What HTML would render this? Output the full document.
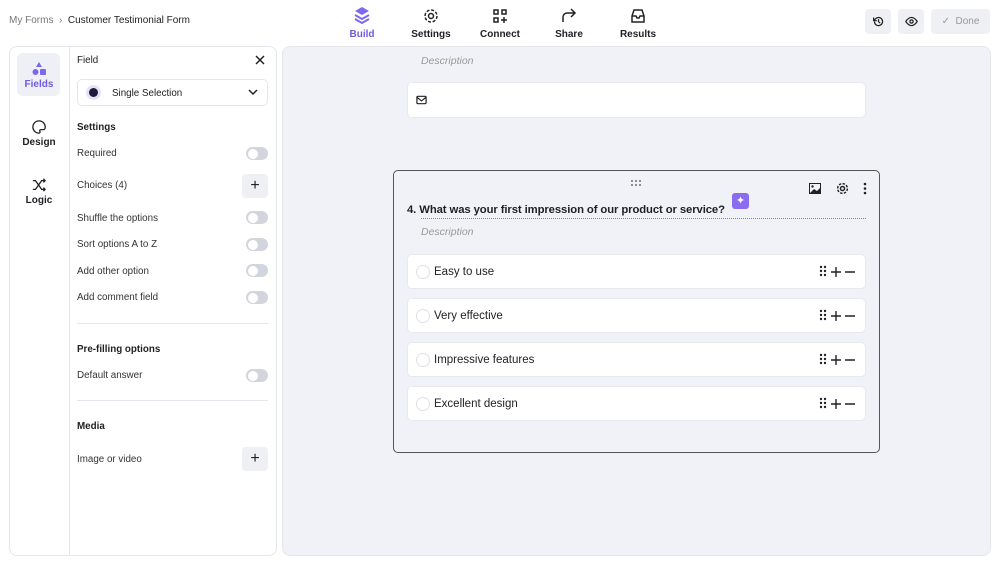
<!DOCTYPE html>
<html><head><meta charset="utf-8"><style>
*{box-sizing:border-box;margin:0;padding:0}
body{width:1000px;height:564px;background:#fff;font-family:"Liberation Sans",sans-serif;position:relative;overflow:hidden;color:#1f1f24}
.abs{position:absolute}
.crumb{left:9px;top:15px;font-size:10px;color:#777}
.crumb b{font-weight:normal;color:#222}
.nav{top:6px;text-align:center;font-size:10px;font-weight:bold;width:60px}
.nav svg{display:block;margin:0 auto 3px}
.tb{top:9px;width:26px;height:25px;background:#eef0f4;border-radius:4px;display:flex;align-items:center;justify-content:center}
.left{left:9px;top:46px;width:268px;height:510px;border:1px solid #e6e7ec;border-radius:8px}
.rail{left:69px;top:46px;width:1px;height:510px;background:#e6e7ec}
.ri{width:44px;text-align:center;font-size:10px;font-weight:bold;left:17px}
.lab{left:77px;font-size:9.8px;color:#333}
.h{left:77px;font-size:9.8px;font-weight:bold;color:#222}
.tg{left:246px;width:22px;height:13px;border-radius:7px;background:#d3d5de}
.tg:after{content:"";position:absolute;left:1.5px;top:1.5px;width:10px;height:10px;border-radius:50%;background:#fff}
.pb{left:242px;width:26px;height:24px;background:#eef0f4;border-radius:4px;text-align:center;line-height:23px;font-size:16px}
.sep{left:77px;width:191px;height:1px;background:#e6e7ec}
.canvas{left:282px;top:46px;width:709px;height:510px;background:#f1f2f7;border-radius:8px;border:1px solid #e6e7ec}
.opt{left:407px;width:459px;height:35px;background:#fff;border-radius:5px;border:1px solid #e8e9ee}
.opt .c{position:absolute;left:8px;top:10px;width:14px;height:14px;border-radius:50%;border:1px solid #e0e0e4}
.opt .t{position:absolute;left:26px;top:11px;font-size:11.5px;color:#222}
.opt .i{position:absolute;right:10px;top:10px;width:36px;height:14px}
</style></head><body>
<div class="abs crumb">My Forms &nbsp;›&nbsp; <b>Customer Testimonial Form</b></div>

<div class="abs nav" style="left:332px;color:#6f5ae0"><svg width="16" height="20" viewBox="0 0 16 20"><path d="M8 1 15 5 8 9 1 5Z" fill="#7b68ee"/><path d="M1 9 8 13 15 9M1 13 8 17 15 13" fill="none" stroke="#7b68ee" stroke-width="2"/></svg>Build</div>
<div class="abs nav" style="left:401px"><svg width="16" height="20" viewBox="0 0 16 16"><circle cx="8" cy="8" r="2.5" fill="none" stroke="#222" stroke-width="1.5"/><circle cx="8" cy="8" r="6" fill="none" stroke="#222" stroke-width="1.5" stroke-dasharray="3 1.7"/></svg>Settings</div>
<div class="abs nav" style="left:470px"><svg width="16" height="20" viewBox="0 0 16 16"><rect x="2" y="2" width="4" height="4" fill="none" stroke="#222" stroke-width="1.5"/><rect x="10" y="2" width="4" height="4" fill="none" stroke="#222" stroke-width="1.5"/><rect x="2" y="10" width="4" height="4" fill="none" stroke="#222" stroke-width="1.5"/><path d="M12 9v6M9 12h6" stroke="#222" stroke-width="1.5"/></svg>Connect</div>
<div class="abs nav" style="left:539px"><svg width="16" height="20" viewBox="0 0 16 16"><path d="M2 14V9a4 4 0 0 1 4-4h8M10 1l4 4-4 4" fill="none" stroke="#222" stroke-width="1.5"/></svg>Share</div>
<div class="abs nav" style="left:608px"><svg width="16" height="20" viewBox="0 0 16 16"><path d="M2 8 4 2h8l2 6v6H2ZM2 8h4l1 2h2l1-2h4" fill="none" stroke="#222" stroke-width="1.5"/></svg>Results</div>

<div class="abs tb" style="left:865px"><svg width="13" height="13" viewBox="0 0 16 16"><path d="M3 8a5 5 0 1 0 1.5-3.5L2 7M2 3v4h4M8 5v3l2 2" fill="none" stroke="#222" stroke-width="1.5"/></svg></div>
<div class="abs tb" style="left:898px"><svg width="13" height="13" viewBox="0 0 16 16"><path d="M1 8s3-5 7-5 7 5 7 5-3 5-7 5-7-5-7-5Z" fill="none" stroke="#222" stroke-width="1.5"/><circle cx="8" cy="8" r="2" fill="none" stroke="#222" stroke-width="1.5"/></svg></div>
<div class="abs tb" style="left:931px;width:59px;color:#999;font-size:10px">✓&nbsp; Done</div>

<div class="abs left"></div>
<div class="abs rail"></div>
<div class="abs" style="left:17px;top:53px;width:43px;height:43px;background:#eef0f6;border-radius:6px"></div>
<div class="abs ri" style="top:62px;color:#6f5ae0"><svg width="14" height="14" viewBox="0 0 14 14" style="display:block;margin:0 auto 3px"><path d="M7 0 10 5H4Z" fill="#7b68ee"/><circle cx="3.5" cy="10" r="3" fill="#7b68ee"/><rect x="8" y="7" width="6" height="6" rx="1" fill="#7b68ee"/></svg>Fields</div>
<div class="abs ri" style="top:120px"><svg width="14" height="14" viewBox="0 0 16 16" style="display:block;margin:0 auto 3px"><path d="M8 1a7 7 0 0 0 0 14c1 0 1.5-1 1-2s0-2 1.5-2H13a2 2 0 0 0 2-2A7 7 0 0 0 8 1Z" fill="none" stroke="#222" stroke-width="1.5"/></svg>Design</div>
<div class="abs ri" style="top:178px"><svg width="14" height="14" viewBox="0 0 16 16" style="display:block;margin:0 auto 3px"><path d="M1 3h3l7 10h4M1 13h3l7-10h4M13 1l2 2-2 2M13 11l2 2-2 2" fill="none" stroke="#222" stroke-width="1.5"/></svg>Logic</div>

<div class="abs lab" style="top:55px;color:#222">Field</div>
<svg class="abs" style="left:255px;top:55px" width="10" height="10" viewBox="0 0 10 10"><path d="M1 1l8 8M9 1l-8 8" stroke="#222" stroke-width="1.5"/></svg>
<div class="abs" style="left:77px;top:79px;width:191px;height:27px;border:1px solid #e6e7ec;border-radius:5px"></div>
<div class="abs" style="left:86px;top:85px;width:15px;height:15px;border-radius:50%;background:#e5e2f6"></div>
<div class="abs" style="left:89px;top:88px;width:9px;height:9px;border-radius:50%;background:#1e1a3c"></div>
<div class="abs lab" style="left:112px;top:88px;color:#222">Single Selection</div>
<svg class="abs" style="left:248px;top:89px" width="10" height="7" viewBox="0 0 10 7"><path d="M1 1l4 4 4-4" fill="none" stroke="#222" stroke-width="1.5"/></svg>

<div class="abs h" style="top:122px">Settings</div>
<div class="abs lab" style="top:148px">Required</div><div class="abs tg" style="top:147px"></div>
<div class="abs lab" style="top:180px">Choices (4)</div><div class="abs pb" style="top:174px">+</div>
<div class="abs lab" style="top:213px">Shuffle the options</div><div class="abs tg" style="top:211px"></div>
<div class="abs lab" style="top:239px">Sort options A to Z</div><div class="abs tg" style="top:238px"></div>
<div class="abs lab" style="top:266px">Add other option</div><div class="abs tg" style="top:264px"></div>
<div class="abs lab" style="top:292px">Add comment field</div><div class="abs tg" style="top:291px"></div>
<div class="abs sep" style="top:323px"></div>
<div class="abs h" style="top:344px">Pre-filling options</div>
<div class="abs lab" style="top:370px">Default answer</div><div class="abs tg" style="top:369px"></div>
<div class="abs sep" style="top:400px"></div>
<div class="abs h" style="top:421px">Media</div>
<div class="abs lab" style="top:454px">Image or video</div><div class="abs pb" style="top:447px">+</div>

<div class="abs canvas"></div>
<div class="abs" style="left:421px;top:55px;font-size:10.5px;font-style:italic;color:#999">Description</div>
<div class="abs" style="left:407px;top:82px;width:459px;height:36px;background:#fff;border-radius:5px;border:1px solid #e8e9ee"></div>
<svg class="abs" style="left:416px;top:95px" width="11" height="10" viewBox="0 0 12 10"><rect x="1" y="1" width="10" height="8" rx="1" fill="none" stroke="#222" stroke-width="1.3"/><path d="M1 2l5 4 5-4" fill="none" stroke="#222" stroke-width="1.3"/></svg>

<div class="abs" style="left:393px;top:170px;width:487px;height:283px;border:1px solid #555;border-radius:5px;background:#f1f2f7"></div>
<svg class="abs" style="left:631px;top:180px" width="10" height="6" viewBox="0 0 10 6"><g fill="#444"><circle cx="1" cy="1" r=".9"/><circle cx="5" cy="1" r=".9"/><circle cx="9" cy="1" r=".9"/><circle cx="1" cy="5" r=".9"/><circle cx="5" cy="5" r=".9"/><circle cx="9" cy="5" r=".9"/></g></svg>
<svg class="abs" style="left:809px;top:183px" width="12" height="11" viewBox="0 0 12 11"><rect x="0.5" y="0.5" width="11" height="10" fill="none" stroke="#222"/><path d="M1 10 5 6 8 8 11 5V10Z" fill="#222"/><circle cx="3.5" cy="3.5" r="1.2" fill="#222"/></svg>
<svg class="abs" style="left:836px;top:182px" width="13" height="13" viewBox="0 0 16 16"><circle cx="8" cy="8" r="2.5" fill="none" stroke="#222" stroke-width="1.8"/><circle cx="8" cy="8" r="6" fill="none" stroke="#222" stroke-width="1.8" stroke-dasharray="3 1.7"/></svg>
<svg class="abs" style="left:863px;top:182px" width="4" height="13" viewBox="0 0 4 13"><g fill="#222"><circle cx="2" cy="2" r="1.3"/><circle cx="2" cy="6.5" r="1.3"/><circle cx="2" cy="11" r="1.3"/></g></svg>
<div class="abs" style="left:732px;top:193px;width:17px;height:16px;background:#8b6cf0;border-radius:3px;color:#fff;font-size:11px;text-align:center;line-height:16px">✦</div>
<div class="abs" style="left:407px;top:204px;font-size:11.3px;font-weight:bold;color:#1f1f24;letter-spacing:-0.1px">4. What was your first impression of our product or service?</div>
<div class="abs" style="left:421px;top:218px;width:445px;border-top:1px dotted #888"></div>
<div class="abs" style="left:421px;top:226px;font-size:10.5px;font-style:italic;color:#999">Description</div>

<div class="abs opt" style="top:254px"><div class="c"></div><div class="t">Easy to use</div><svg class="i" viewBox="0 0 36 14"><g fill="#222"><circle cx="2" cy="2" r="1.2"/><circle cx="6" cy="2" r="1.2"/><circle cx="2" cy="6" r="1.2"/><circle cx="6" cy="6" r="1.2"/><circle cx="2" cy="10" r="1.2"/><circle cx="6" cy="10" r="1.2"/></g><path d="M12 7h10M17 2v10M26 7h10" stroke="#222" stroke-width="1.4"/></svg></div>
<div class="abs opt" style="top:298px"><div class="c"></div><div class="t">Very effective</div><svg class="i" viewBox="0 0 36 14"><g fill="#222"><circle cx="2" cy="2" r="1.2"/><circle cx="6" cy="2" r="1.2"/><circle cx="2" cy="6" r="1.2"/><circle cx="6" cy="6" r="1.2"/><circle cx="2" cy="10" r="1.2"/><circle cx="6" cy="10" r="1.2"/></g><path d="M12 7h10M17 2v10M26 7h10" stroke="#222" stroke-width="1.4"/></svg></div>
<div class="abs opt" style="top:342px"><div class="c"></div><div class="t">Impressive features</div><svg class="i" viewBox="0 0 36 14"><g fill="#222"><circle cx="2" cy="2" r="1.2"/><circle cx="6" cy="2" r="1.2"/><circle cx="2" cy="6" r="1.2"/><circle cx="6" cy="6" r="1.2"/><circle cx="2" cy="10" r="1.2"/><circle cx="6" cy="10" r="1.2"/></g><path d="M12 7h10M17 2v10M26 7h10" stroke="#222" stroke-width="1.4"/></svg></div>
<div class="abs opt" style="top:386px"><div class="c"></div><div class="t">Excellent design</div><svg class="i" viewBox="0 0 36 14"><g fill="#222"><circle cx="2" cy="2" r="1.2"/><circle cx="6" cy="2" r="1.2"/><circle cx="2" cy="6" r="1.2"/><circle cx="6" cy="6" r="1.2"/><circle cx="2" cy="10" r="1.2"/><circle cx="6" cy="10" r="1.2"/></g><path d="M12 7h10M17 2v10M26 7h10" stroke="#222" stroke-width="1.4"/></svg></div>
</body></html>
